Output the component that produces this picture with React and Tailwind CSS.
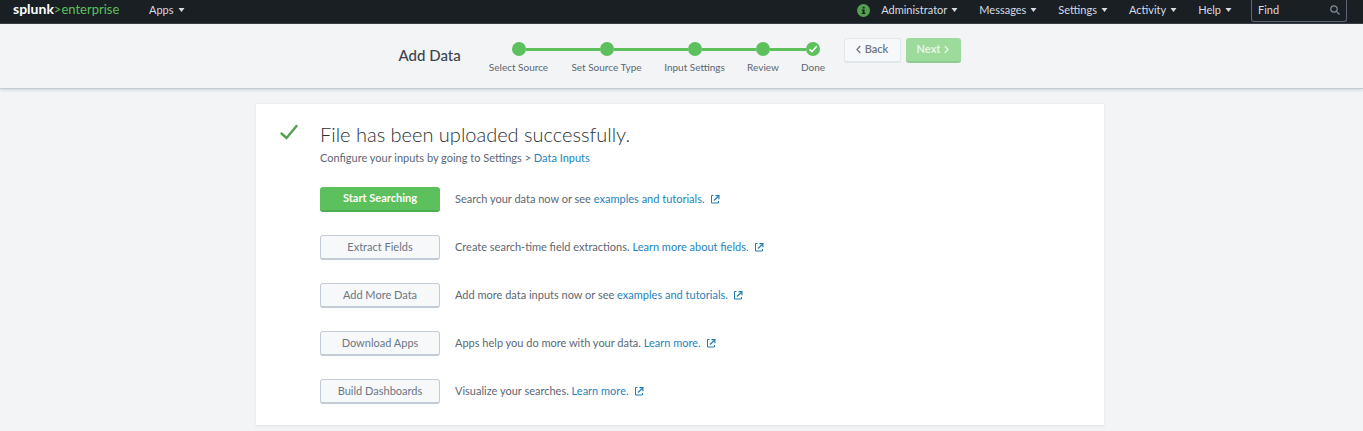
import React from 'react';

const menus = ['Administrator', 'Messages', 'Settings', 'Activity', 'Help'];

const steps = [
  { label: 'Select Source', width: 'w-[82px]' },
  { label: 'Set Source Type', width: 'w-[94px]' },
  { label: 'Input Settings', width: 'w-[82px]' },
  { label: 'Review', width: 'w-[55px]' },
  { label: 'Done', width: 'w-[45px]' },
];

const actions = [
  { button: 'Start Searching', text: 'Search your data now or see', link: 'examples and tutorials.', primary: true },
  { button: 'Extract Fields', text: 'Create search-time field extractions.', link: 'Learn more about fields.' },
  { button: 'Add More Data', text: 'Add more data inputs now or see', link: 'examples and tutorials.' },
  { button: 'Download Apps', text: 'Apps help you do more with your data.', link: 'Learn more.' },
  { button: 'Build Dashboards', text: 'Visualize your searches.', link: 'Learn more.' },
];

function Menu({ label }) {
  return (
    <button type="button" className="flex items-center gap-1 whitespace-nowrap text-[#d5dce3]">
      {label}
      <svg width="7" height="4" viewBox="0 0 7 4" fill="currentColor" aria-hidden="true">
        <path d="M.5 0h6L3.500 4z" />
      </svg>
    </button>
  );
}

function ExternalIcon() {
  return (
    <svg className="ml-1.5 inline-block align-[-1px]" width="9" height="9" viewBox="0 0 9 9" fill="none" stroke="#1e7cb5" aria-hidden="true">
      <path d="M2.500.5h-2v7.500h7V6" />
      <path d="M3 5.500 7.500 1.300" strokeWidth="1.2" />
      <path d="M4.500.6h3.400v3.600" strokeWidth="1.2" />
    </svg>
  );
}

function Chevron({ d }) {
  return (
    <svg width="5" height="9" viewBox="0 0 5 9" fill="none" stroke="currentColor" strokeWidth="1.3" aria-hidden="true">
      <path d={d} />
    </svg>
  );
}

export default function App() {
  return (
    <div className="min-h-screen bg-[#f2f4f5] font-['Lato',sans-serif] text-[11px] leading-4 text-[#5c6773]">
      <header className="flex h-6 items-start border-b border-[#31373e] bg-[#1a1f23] pr-4 pl-[13px]">
        <a href="#home" className="mt-px w-[136px] text-[13px] leading-4 text-[#5cc05c]">
          <span className="text-[14px] font-bold text-white">splunk</span>&gt;enterprise
        </a>
        <nav className="flex h-5 flex-1 items-center justify-between">
          <Menu label="Apps" />
          <div className="flex items-center gap-[21px] pr-[19px]">
            <svg className="-mr-[10px]" width="13" height="13" viewBox="0 0 13 13" aria-hidden="true">
              <circle cx="6.5" cy="6.5" r="6.5" fill="#53a051" />
              <path d="M5.6 2.8h2v1.6h-2zM4.8 5.4h2.8v3.7h.8v1H4.700v-1h.9V6.400h-.8z" fill="#1a1f23" />
            </svg>
            {menus.map((m) => (
              <Menu key={m} label={m} />
            ))}
          </div>
        </nav>
        <label className="flex h-[22px] w-24 items-center rounded-b-[3px] border border-t-0 border-[#5c6773] px-1.5 pb-0.5">
          <input aria-label="Find" placeholder="Find" className="w-full min-w-0 bg-transparent outline-none placeholder:text-[#d5dce3]" />
          <svg width="10" height="10" viewBox="0 0 10 10" fill="none" stroke="#818d99" strokeWidth="1.2" className="shrink-0" aria-hidden="true">
            <circle cx="4" cy="4" r="3.2" />
            <path d="M6.4 6.4 9.5 9.5" />
          </svg>
        </label>
      </header>

      <div className="flex h-[65px] justify-center border-b border-[#c3cbd4] pr-1 shadow-[0_1px_3px_rgba(150,165,185,0.4)]">
        <h1 className="mt-[21px] w-[79px] text-[15px] leading-5 font-medium text-[#3c444d]">Add Data</h1>
        <ol className="mt-[18px] flex">
          {steps.map((s, i) => (
            <li key={s.label} className={`flex flex-col items-center ${s.width}`}>
              <div className="flex h-[14px] w-full items-center">
                <span className={`h-[3px] flex-1 ${i === 0 ? '' : 'bg-[#5cc05c]'}`} />
                <span className="flex size-[14px] items-center justify-center rounded-full bg-[#5cc05c]">
                  {i === steps.length - 1 && (
                    <svg width="10" height="10" viewBox="0 0 10 10" fill="none" stroke="#fff" strokeWidth="1.6" aria-hidden="true">
                      <path d="M1.5 5.3 4 7.6 8.7 2.2" />
                    </svg>
                  )}
                </span>
                <span className={`h-[3px] flex-1 ${i === steps.length - 1 ? '' : 'bg-[#5cc05c]'}`} />
              </div>
              <span className="mt-[3px] text-[10px] whitespace-nowrap">{s.label}</span>
            </li>
          ))}
        </ol>
        <div className="mt-[14px] ml-2 flex gap-[5px]">
          <button type="button" className="flex h-[25px] w-[57px] items-center justify-center gap-1 rounded-[3px] border border-b-2 border-[#e1e6eb] bg-[#f7f8fa] pb-0.5 font-semibold text-[#6b7785]">
            <Chevron d="M4.2 1 1 4.5 4.2 8" />
            Back
          </button>
          <button type="button" disabled className="flex h-[25px] w-[55px] items-center justify-center gap-1 rounded-[3px] border-b-2 border-[#8fcb8f] bg-[#9ddb9d] pb-px font-bold text-[#e4f6e4]">
            Next
            <Chevron d="M.8 1 4 4.5.8 8" />
          </button>
        </div>
      </div>

      <div className="pt-[15px] pr-[3px]">
        <main className="mx-auto flex max-w-[848px] border-b border-[#e1e6eb] bg-white px-6 pt-5 pb-[21px] shadow-[0_0_2px_rgba(150,165,185,0.25)]">
          <svg className="w-10 shrink-0" width="40" height="18" viewBox="0 0 40 18" fill="none" stroke="#53a051" strokeWidth="2.4" strokeLinecap="round" aria-hidden="true">
            <path d="m1.5 9.5 5 4.5L16.500 2" />
          </svg>
          <div>
            <h2 className="text-[20px] leading-5 font-light text-[#2b3033]">File has been uploaded successfully.</h2>
            <p className="mt-1.5">
              Configure your inputs by going to Settings &gt; <a href="#inputs" className="text-[#1e84bd]">Data Inputs</a>
            </p>
            <ul className="mt-[21px] flex flex-col gap-[23px]">
              {actions.map((a) => (
                <li key={a.button} className="flex items-start gap-[15px]">
                  <button
                    type="button"
                    className={`h-[25px] w-[120px] rounded-[3px] pb-px ${
                      a.primary
                        ? 'border-b-2 border-[#4fae50] bg-[#5cc05c] font-bold text-white'
                        : 'border border-b-2 border-[#c3cbd4] bg-[#f7f8fa] text-[#6b7785]'
                    }`}
                  >
                    {a.button}
                  </button>
                  <p className="mt-1">
                    {a.text}{' '}
                    <a href="#docs" className="text-[#1e84bd]">
                      {a.link}
                      <ExternalIcon />
                    </a>
                  </p>
                </li>
              ))}
            </ul>
          </div>
        </main>
      </div>
    </div>
  );
}
